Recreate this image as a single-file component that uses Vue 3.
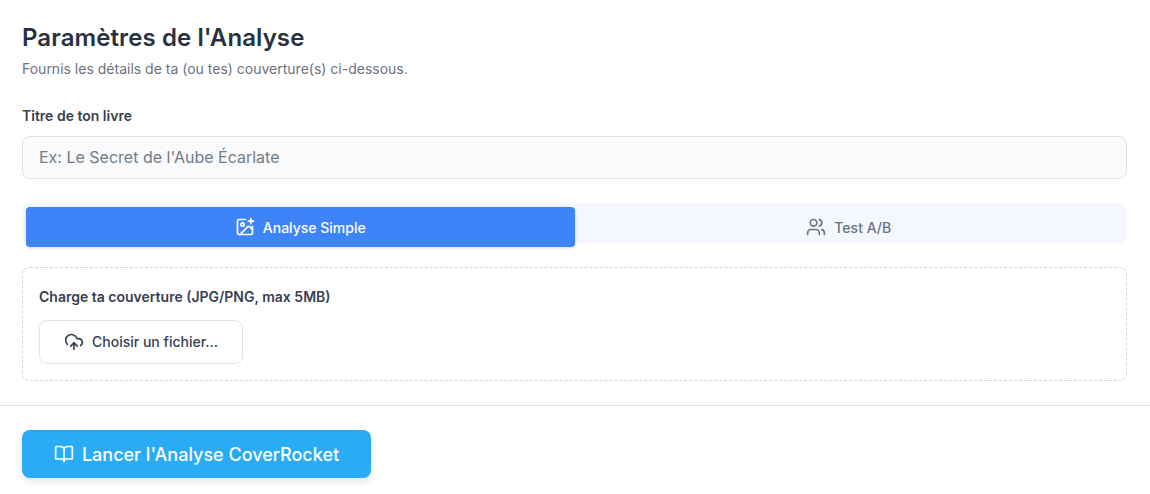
<script setup>
const title = "Paramètres de l'Analyse";
</script>

<template>
  <div class="panel">
    <div class="body">
      <h2>{{ title }}</h2>
      <p class="sub">Fournis les détails de ta (ou tes) couverture(s) ci-dessous.</p>

      <label class="lbl">Titre de ton livre</label>
      <input class="txt" type="text" placeholder="Ex: Le Secret de l'Aube Écarlate" />

      <div class="tabs">
        <button class="tab active">
          <svg width="20" height="20" viewBox="0 0 24 24" fill="none" stroke="currentColor" stroke-width="2" stroke-linecap="round" stroke-linejoin="round">
            <path d="M16 5h6" />
            <path d="M19 2v6" />
            <path d="M21 11.5V19a2 2 0 0 1-2 2H5a2 2 0 0 1-2-2V5a2 2 0 0 1 2-2h7.5" />
            <path d="m21 15-3.086-3.086a2 2 0 0 0-2.828 0L6 21" />
            <circle cx="9" cy="9" r="2" />
          </svg>
          Analyse Simple
        </button>
        <button class="tab">
          <svg width="20" height="20" viewBox="0 0 24 24" fill="none" stroke="currentColor" stroke-width="2" stroke-linecap="round" stroke-linejoin="round">
            <path d="M16 21v-2a4 4 0 0 0-4-4H6a4 4 0 0 0-4 4v2" />
            <circle cx="9" cy="7" r="4" />
            <path d="M22 21v-2a4 4 0 0 0-3-3.87" />
            <path d="M16 3.13a4 4 0 0 1 0 7.75" />
          </svg>
          Test A/B
        </button>
      </div>

      <div class="drop">
        <div class="drop-lbl">Charge ta couverture (JPG/PNG, max 5MB)</div>
        <button class="file">
          <svg width="20" height="20" viewBox="0 0 24 24" fill="none" stroke="currentColor" stroke-width="2" stroke-linecap="round" stroke-linejoin="round">
            <path d="M12 13v8" />
            <path d="M4 14.899A7 7 0 1 1 15.71 8h1.79a4.5 4.5 0 0 1 2.5 8.242" />
            <path d="m8 17 4-4 4 4" />
          </svg>
          <span class="file-txt">Choisir un fichier...</span>
        </button>
      </div>
    </div>

    <div class="foot">
      <button class="go">
        <svg width="20" height="20" viewBox="0 0 24 24" fill="none" stroke="currentColor" stroke-width="2" stroke-linecap="round" stroke-linejoin="round">
          <path d="M12 7v14" />
          <path d="M3 18a1 1 0 0 1-1-1V4a1 1 0 0 1 1-1h5a4 4 0 0 1 4 4 4 4 0 0 1 4-4h5a1 1 0 0 1 1 1v13a1 1 0 0 1-1 1h-6a3 3 0 0 0-3 3 3 3 0 0 0-3-3z" />
        </svg>
        Lancer l'Analyse CoverRocket
      </button>
    </div>
  </div>
</template>

<style scoped>
.panel {
  width: 1150px;
  height: 494px;
  background: #fff;
  font-family: Inter, "Liberation Sans", sans-serif;
  color: #374151;
  box-sizing: border-box;
}
.body {
  padding: 23px 23px 24px 22px;
  display: flex;
  flex-direction: column;
  border-bottom: 1px solid #e0e2e6;
  height: 406px;
  box-sizing: border-box;
}
.body > * {
  flex-shrink: 0;
}
h2 {
  margin: 0;
  font-size: 24px;
  line-height: 30px;
  font-weight: 600;
  color: #283141;
  letter-spacing: 0.1px;
}
.sub {
  margin: 7px 0 0;
  font-size: 14px;
  line-height: 18px;
  color: #6b7280;
}
.lbl {
  margin-top: 28px;
  font-size: 14px;
  line-height: 20px;
  font-weight: 600;
  color: #374151;
}
.txt {
  margin-top: 10px;
  height: 43px;
  padding: 0 16px 2px;
  box-sizing: border-box;
  border: 1px solid #dfe2e7;
  border-radius: 8px;
  background: #f8fafc;
  font: 400 16px Inter, "Liberation Sans", sans-serif;
  outline: none;
}
.txt::placeholder {
  color: #737b87;
  opacity: 1;
}
.tabs {
  margin-top: 24px;
  height: 40px;
  box-sizing: border-box;
  padding: 4px 4px 0;
  display: flex;
  align-items: flex-start;
  background: #f4f8fe;
  border-radius: 8px;
}
.tab {
  flex: 1;
  height: 40px;
  display: flex;
  align-items: center;
  justify-content: center;
  gap: 8px;
  padding: 0;
  border: 0;
  border-radius: 4px;
  background: transparent;
  color: #6b7280;
  font: 500 14px Inter, "Liberation Sans", sans-serif;
}
.tab.active {
  background: #3f83f8;
  color: #fff;
  box-shadow: 0 1px 3px rgba(0, 0, 0, 0.15);
}
.drop {
  margin-top: 24px;
  height: 114px;
  box-sizing: border-box;
  padding: 19px 16px 16px;
  border: 1px dashed #d1d5db;
  border-radius: 8px;
}
.drop-lbl {
  font-size: 14px;
  line-height: 20px;
  font-weight: 600;
}
.file {
  margin-top: 13px;
  width: 204px;
  height: 44px;
  display: flex;
  align-items: center;
  justify-content: center;
  gap: 8px;
  background: #fff;
  border: 1px solid #e0e3e8;
  border-radius: 8px;
  color: #374151;
  font: 500 14px Inter, "Liberation Sans", sans-serif;
}
.file-txt {
  margin-bottom: 2px;
}
.foot {
  padding: 24px 22px;
}
.go {
  width: 349px;
  height: 48px;
  display: flex;
  align-items: center;
  justify-content: center;
  gap: 8px;
  border: 0;
  border-radius: 8px;
  background: #29abf6;
  color: #fff;
  font: 500 18px Inter, "Liberation Sans", sans-serif;
  box-shadow: 0 4px 6px rgba(0, 0, 0, 0.1);
}
</style>
